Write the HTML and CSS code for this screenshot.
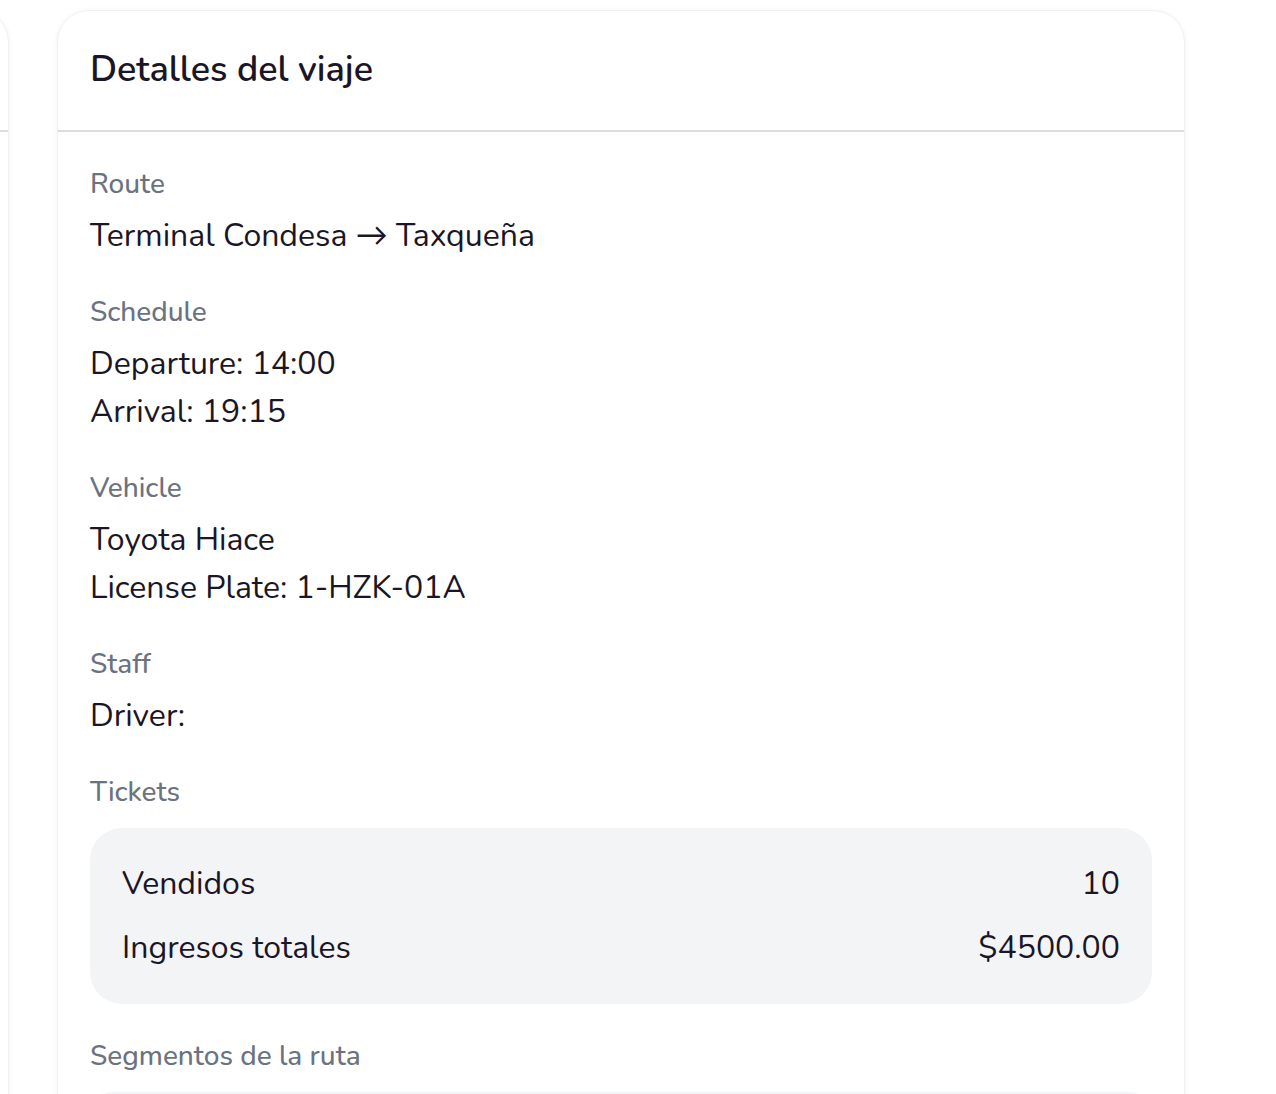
FILE: index.html
```html
<!DOCTYPE html>
<html lang="es">
<head>
<meta charset="utf-8">
<title>Detalles del viaje</title>
<link rel="stylesheet" href="styles.css">
</head>
<body>
<div class="page">
  <div class="side">
    <section class="card side-card">
      <header class="card-header"><h2 class="card-title">&nbsp;</h2></header>
      <div class="card-body side-body"></div>
    </section>
  </div>
  <section class="card main-card">
    <header class="card-header">
      <h2 class="card-title">Detalles del viaje</h2>
    </header>
    <div class="card-body">
      <div class="field">
        <div class="label">Route</div>
        <div class="value">Terminal Condesa → Taxqueña</div>
      </div>
      <div class="field">
        <div class="label">Schedule</div>
        <div class="value">Departure: 14:00</div>
        <div class="value">Arrival: 19:15</div>
      </div>
      <div class="field">
        <div class="label">Vehicle</div>
        <div class="value">Toyota Hiace</div>
        <div class="value">License Plate: 1-HZK-01A</div>
      </div>
      <div class="field">
        <div class="label">Staff</div>
        <div class="value">Driver: </div>
      </div>
      <div class="field">
        <div class="label label-lg">Tickets</div>
        <div class="stats">
          <div class="stat-row"><span>Vendidos</span><span>10</span></div>
          <div class="stat-row"><span>Ingresos totales</span><span>$4500.00</span></div>
        </div>
      </div>
      <div class="field">
        <div class="label label-lg">Segmentos de la ruta</div>
        <div class="segments">
          <div class="segment"></div>
        </div>
      </div>
    </div>
  </section>
</div>
</body>
</html>
```

FILE: styles.css
```css
html, body {
  margin: 0;
  padding: 0;
  background: #ffffff;
}

body {
  font-family: "Nunito", "Lato", "Open Sans", sans-serif;
  color: #1b1626;
  overflow: hidden;
}

.page {
  display: flex;
  align-items: flex-start;
  gap: 48px;
  padding-top: 10px;
}

.side {
  width: 9px;
  flex-shrink: 0;
  display: flex;
  justify-content: flex-end;
}

.card {
  background: #ffffff;
  border: 1px solid #f1f1f2;
  border-radius: 32px;
  box-shadow: 0 1px 6px rgba(0, 0, 0, 0.05);
  box-sizing: border-box;
}

.side-card {
  width: 420px;
  flex-shrink: 0;
}

.side-body {
  height: 1100px;
}

.main-card {
  width: 1128px;
  flex-shrink: 0;
}

.card-header {
  padding: 31px 32px 32px;
  border-bottom: 2px solid #dcdcdd;
}

.card-title {
  margin: 0;
  font-size: 36px;
  line-height: 56px;
  font-weight: 600;
  color: #1b1626;
}

.card-body {
  padding: 32px;
  display: flex;
  flex-direction: column;
  gap: 32px;
}

.label {
  font-size: 28px;
  line-height: 40px;
  font-weight: 500;
  color: #6b7280;
  margin-bottom: 8px;
}

.label-lg {
  margin-bottom: 16px;
}

.value {
  font-size: 32px;
  line-height: 48px;
  color: #1b1626;
}

.stats {
  background: #f3f4f6;
  border-radius: 32px;
  padding: 32px;
  display: flex;
  flex-direction: column;
  gap: 16px;
}

.stat-row {
  display: flex;
  justify-content: space-between;
  font-size: 32px;
  line-height: 48px;
  color: #1b1626;
}

.segments {
  display: flex;
  flex-direction: column;
  gap: 16px;
}

.segment {
  height: 160px;
  border-radius: 24px;
  border: 2px solid #f3f4f6;
  box-shadow: 0 1px 4px rgba(0, 0, 0, 0.04);
}
```
